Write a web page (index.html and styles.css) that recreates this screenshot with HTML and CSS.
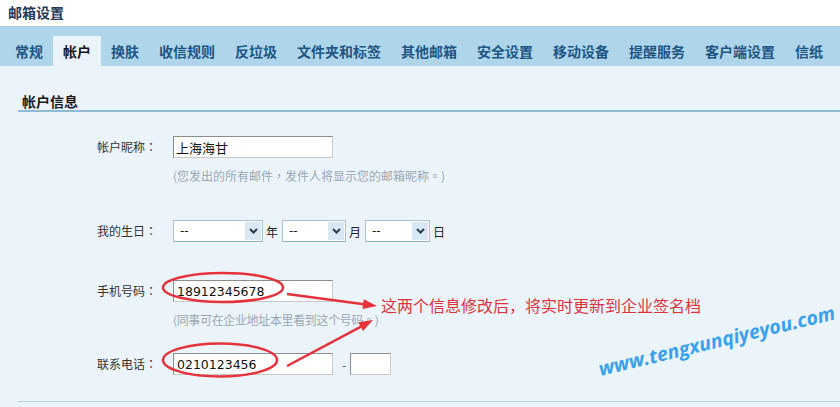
FILE: index.html
```html
<!DOCTYPE html>
<html>
    <head>
        <title>邮箱设置</title>
        <meta charset="utf-8">
        <link rel="stylesheet" href="styles.css">
    </head>
    <body>
        <div class="page-title">邮箱设置</div>
        <ul class="tabs">
            <li>常规</li>
            <li class="active">帐户</li>
            <li>换肤</li>
            <li>收信规则</li>
            <li>反垃圾</li>
            <li>文件夹和标签</li>
            <li>其他邮箱</li>
            <li>安全设置</li>
            <li>移动设备</li>
            <li>提醒服务</li>
            <li>客户端设置</li>
            <li>信纸</li>
        </ul>
        <div class="content">
            <h2 class="section-title">帐户信息</h2>
            <div class="form">
                <div class="row row-nick">
                    <label class="label">帐户昵称<span class="punct">：</span></label>
                    <input class="text text-cn" type="text" value="上海海甘">
                </div>
                <div class="hint">(您发出的所有邮件<span class="punct">，</span>发件人将显示您的邮箱昵称<span class="punct">。</span>)</div>

                <div class="row row-birth">
                    <label class="label">我的生日<span class="punct">：</span></label>
                    <div class="select sel-year"><span class="sel-value">--</span><span class="sel-arrow"><svg width="9" height="6" viewBox="0 0 9 6"><path d="M1 1 L4.5 4.5 L8 1" fill="none" stroke="#2f3b48" stroke-width="2"/></svg></span></div>
                    <span class="unit">年</span>
                    <div class="select sel-month"><span class="sel-value">--</span><span class="sel-arrow"><svg width="9" height="6" viewBox="0 0 9 6"><path d="M1 1 L4.5 4.5 L8 1" fill="none" stroke="#2f3b48" stroke-width="2"/></svg></span></div>
                    <span class="unit">月</span>
                    <div class="select sel-day"><span class="sel-value">--</span><span class="sel-arrow"><svg width="9" height="6" viewBox="0 0 9 6"><path d="M1 1 L4.5 4.5 L8 1" fill="none" stroke="#2f3b48" stroke-width="2"/></svg></span></div>
                    <span class="unit">日</span>
                </div>

                <div class="row row-mobile">
                    <label class="label">手机号码<span class="punct">：</span></label>
                    <input class="text" type="text" value="18912345678">
                </div>
                <div class="hint hint-short">(同事可在企业地址本里看到这个号码<span class="punct">。</span>)</div>

                <div class="row row-phone">
                    <label class="label">联系电话<span class="punct">：</span></label>
                    <input class="text" type="text" value="0210123456">
                    <span class="dash">-</span>
                    <input class="text text-ext" type="text" value="">
                </div>
            </div>
        </div>

        <!-- 截图上的标注 -->
        <svg class="marks" width="840" height="407" viewBox="0 0 840 407">
            <ellipse cx="223" cy="287.5" rx="60" ry="14.5" fill="none" stroke="#e5323b" stroke-width="2.5"/>
            <ellipse cx="220" cy="360" rx="57" ry="16.5" fill="none" stroke="#e5323b" stroke-width="2.5"/>
            <line x1="287" y1="294" x2="364" y2="304.2" stroke="#e5323b" stroke-width="2.5"/>
            <polygon points="377,306 363.8,299.2 362.4,309.1" fill="#e5323b"/>
            <line x1="287" y1="366" x2="361" y2="326.6" stroke="#e5323b" stroke-width="2.5"/>
            <polygon points="373,320 363,331 358.3,322.2" fill="#e5323b"/>
        </svg>
        <div class="note">这两个信息修改后，将实时更新到企业签名档</div>
        <div class="watermark">www.tengxunqiyeyou.com</div>
    </body>
</html>
```

FILE: styles.css
```css
body{
    margin: 0;
    font-family: "Noto Sans CJK SC", sans-serif;
    font-size: 12px;
    color: #333;
    background-color: #ecf4fb;
    position: relative;
    width: 840px;
    height: 407px;
    overflow: hidden;
}

.page-title{
    height: 26px;
    line-height: 24px;
    padding-left: 8px;
    font-size: 14px;
    font-weight: bold;
    color: #1f3a5b;
    background-color: #fff;
}

ul.tabs{
    list-style: none;
    margin: 0;
    padding: 10px 0 0 5px;
    display: flex;
    background-color: #afd5ea;
    border-top: 1px solid #a5cfe6;
    height: 29px;
}
ul.tabs li{
    padding: 0 10px;
    line-height: 30px;
    height: 30px;
    margin-top: -1px;
    font-size: 14px;
    font-weight: bold;
    color: #1d5584;
    white-space: nowrap;
}
ul.tabs li.active{
    background-color: #ebf4fb;
    color: #161616;
}

.content{
    padding-left: 18px;
    padding-top: 26px;
}
h2.section-title{
    margin: 0;
    padding-left: 4px;
    height: 18px;
    line-height: 18px;
    font-size: 14px;
    font-weight: bold;
    color: #1a1a1a;
    border-bottom: 2px solid #8fbbd5;
}

.form{
    padding-bottom: 26px;
    border-bottom: 1px solid #b6d2e5;
}
.row{
    display: flex;
    align-items: center;
    height: 22px;
}
.row-nick{margin-top: 24px;}
.row-birth{margin-top: 35px;}
.row-mobile{margin-top: 38px;}
.row-phone{margin-top: 26px;}

.label{
    width: 139px;
    text-align: right;
    line-height: 18px;
    color: #333;
}
/* 全角标点居中 */
.punct{
    font-family: "Noto Sans CJK TC", sans-serif;
}

input.text{
    margin: 0 0 0 16px;
    width: 160px;
    height: 22px;
    box-sizing: border-box;
    padding: 0 3px;
    background-color: #fff;
    border-style: solid;
    border-width: 1px;
    border-color: #8d8d8d #c9c9c9 #c9c9c9 #8d8d8d;
    font-family: "DejaVu Sans", "Noto Sans CJK SC", sans-serif;
    font-size: 12.5px;
    color: #111;
    outline: none;
}
input.text-cn{
    font-family: "Noto Sans CJK SC", sans-serif;
    font-size: 13px;
    padding-left: 2px;
}
input.text-ext{
    width: 41px;
    margin-left: 4px;
}
.dash{
    margin-left: 9px;
    color: #555;
}

.hint{
    margin-top: 9px;
    padding-left: 155px;
    line-height: 18px;
    color: #98a7b3;
}
.hint.hint-short{
    margin-top: 11px;
    line-height: 14px;
    letter-spacing: -0.35px;
}

/* 下拉框 */
.select{
    display: flex;
    height: 22px;
    box-sizing: border-box;
    border: 1px solid #a6c3d7;
    border-bottom-color: #8fb0c6;
    background-color: #fff;
}
.sel-year{width: 90px; margin-left: 16px;}
.sel-month{width: 64px;}
.sel-day{width: 65px;}
.sel-value{
    flex: 1;
    padding-left: 6px;
    line-height: 20px;
    font-family: "DejaVu Sans", sans-serif;
    font-size: 12px;
    color: #222;
}
.sel-arrow{
    width: 16px;
    margin: 1px 1px 1px 0;
    background-color: #d5e8f4;
    display: flex;
    align-items: center;
    justify-content: center;
}
.unit{
    margin: 0 4px 0 3px;
    color: #222;
}

/* 标注 */
svg.marks{
    position: absolute;
    left: 0;
    top: 0;
    pointer-events: none;
}
.note{
    position: absolute;
    left: 381px;
    top: 297px;
    line-height: 16px;
    font-size: 16px;
    color: #dc343d;
    white-space: nowrap;
}
.watermark{
    position: absolute;
    left: 601px;
    top: 359px;
    font-family: "Open Sans", sans-serif;
    font-size: 19.5px;
    line-height: 19px;
    font-weight: bold;
    font-style: italic;
    color: #3aa1ee;
    white-space: nowrap;
    transform-origin: 0 100%;
    transform: rotate(-13.6deg);
}
```
